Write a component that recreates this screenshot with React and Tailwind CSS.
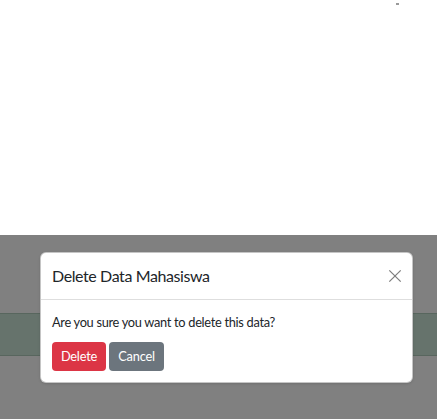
import React from "react";

const CloseIcon = () => (
  <svg width="14" height="14" viewBox="0 0 16 16" fill="none" stroke="#7d7d7d" strokeWidth="1.4">
    <line x1="1.5" y1="1.5" x2="14.5" y2="14.5" />
    <line x1="14.5" y1="1.5" x2="1.5" y2="14.5" />
  </svg>
);

const DeleteModal = () => (
  <div className="absolute left-[40px] top-[17px] w-[373px] bg-white rounded-[6px] border border-[#6f6f6f]/40 shadow-sm">
    <div className="flex items-center justify-between h-[47px] pl-[11px] pr-[9px] border-b border-[#dedede]">
      <h5 className="text-[16px] leading-[24px] tracking-[-0.4px] text-[#212529]">Delete Data Mahasiswa</h5>
      <button type="button" className="p-[1px]" aria-label="Close">
        <CloseIcon />
      </button>
    </div>
    <div className="px-[11px] pt-[13px] pb-[11px]">
      <p className="text-[12.8px] leading-[19px] tracking-[-0.3px] text-[#212529]">
        Are you sure you want to delete this data?
      </p>
      <div className="flex gap-[3px] mt-[10px]">
        <button className="h-[29px] w-[54px] rounded-[4px] bg-[#dc3545] text-white text-[12.8px] tracking-[-0.2px]">
          Delete
        </button>
        <button className="h-[29px] w-[55px] rounded-[4px] bg-[#6c757d] text-white text-[12.8px] tracking-[-0.2px]">
          Cancel
        </button>
      </div>
    </div>
  </div>
);

export default function App() {
  return (
    <div className="w-[437px] h-[419px] overflow-hidden bg-white" style={{ fontFamily: 'Lato, "Noto Sans", sans-serif' }}>
      <div className="h-[235px] flex justify-end">
        <div className="mt-[3px] mr-[38px] w-[3px] h-[2px] bg-[#9a9a9a]" />
      </div>
      <div className="relative h-[184px] bg-[#808080] pt-[78px]">
        <div className="h-[43px] bg-[#66736c] border-y border-[#58665e]" />
        <DeleteModal />
      </div>
    </div>
  );
}
